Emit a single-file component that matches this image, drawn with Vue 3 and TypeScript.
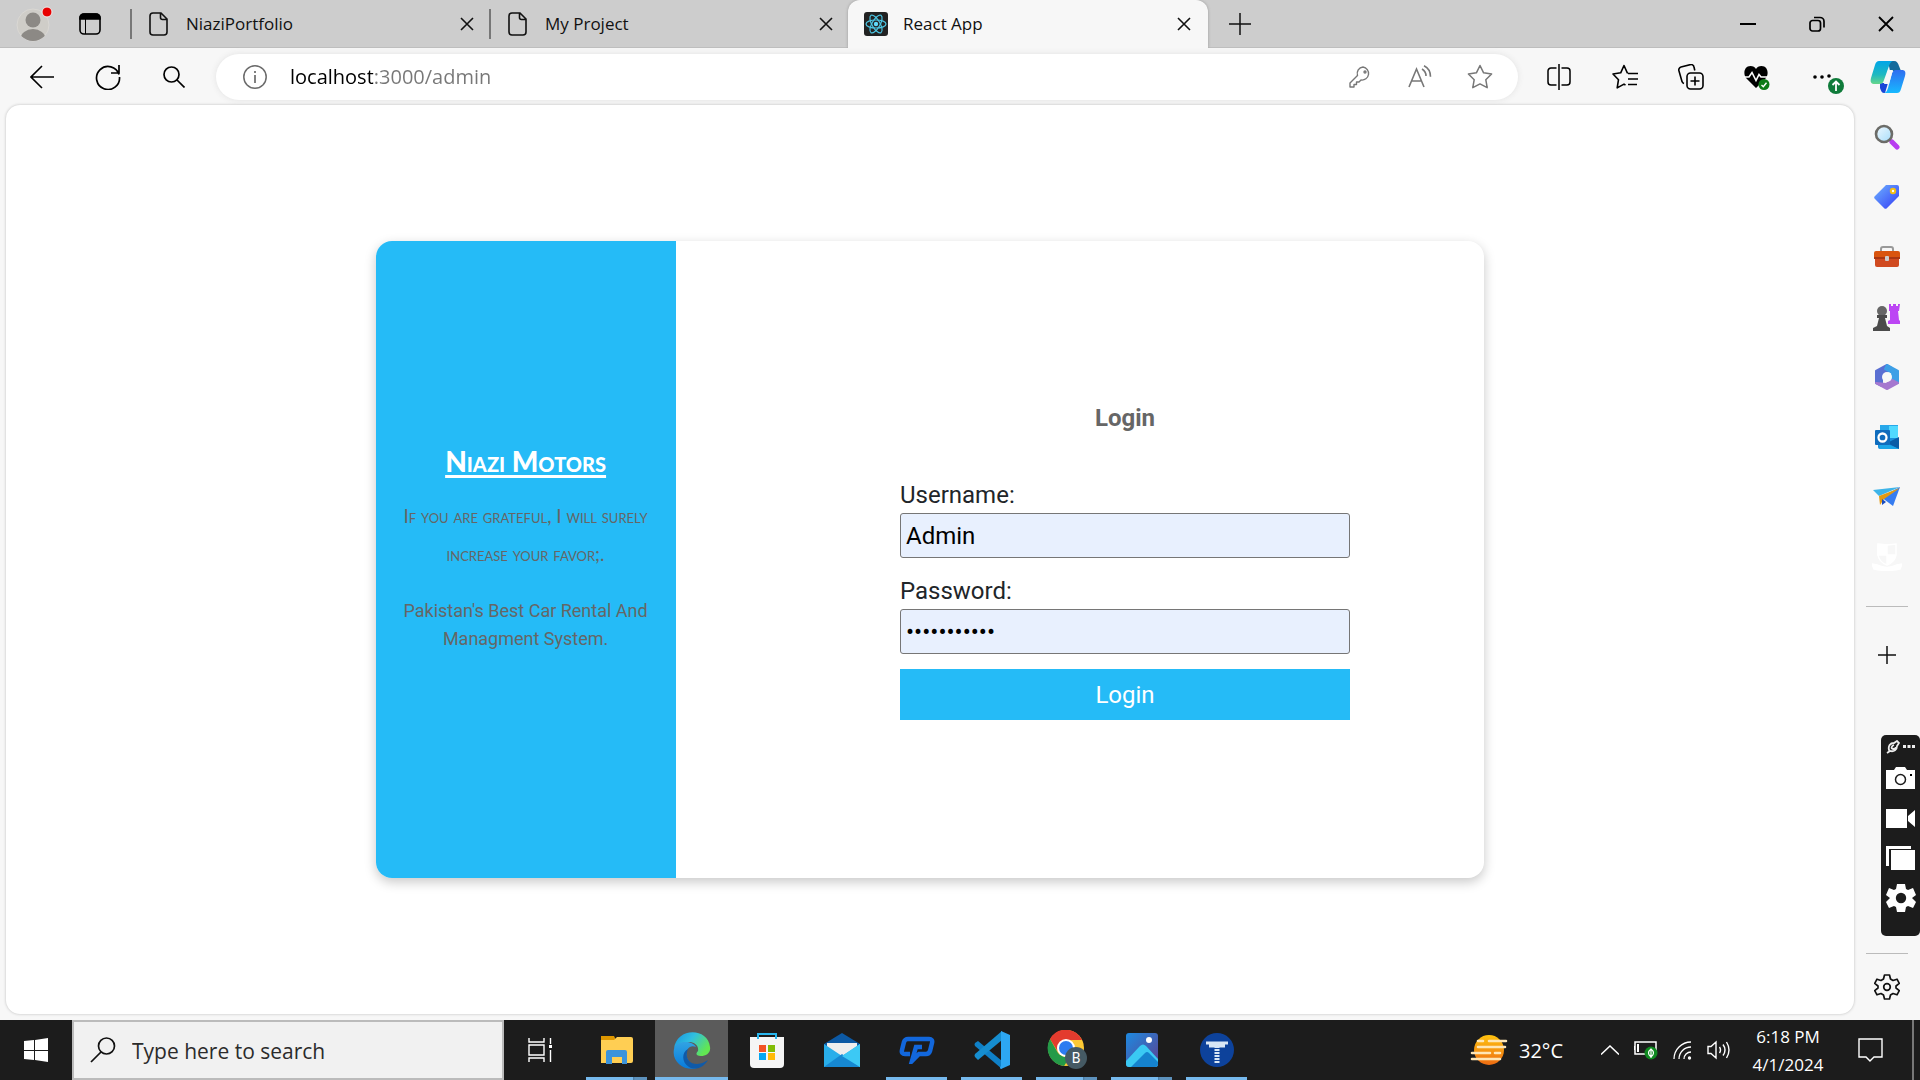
<script setup lang="ts">
import { ref } from 'vue'

interface Tab {
  title: string
  kind: 'page' | 'react'
  active: boolean
}

const tabs: Tab[] = [
  { title: 'NiaziPortfolio', kind: 'page', active: false },
  { title: 'My Project', kind: 'page', active: false },
  { title: 'React App', kind: 'react', active: true },
]

const address = ref('localhost:3000/admin')
const username = ref('Admin')
const password = ref('niazimotors')
const search = ref('')
</script>

<template>
  <div class="desktop">
    <header class="tabstrip">
      <button class="avatar" aria-label="Profile">
        <svg width="42" height="42" viewBox="0 0 42 42">
          <defs><clipPath id="face"><circle cx="20" cy="22" r="16" /></clipPath></defs>
          <circle cx="20" cy="22" r="16" fill="#cfcdc8" stroke="#dad8d4" />
          <g fill="#8c8985" clip-path="url(#face)">
            <ellipse cx="20" cy="17" rx="7.5" ry="7.5" />
            <ellipse cx="20" cy="36" rx="12.500" ry="10" />
          </g>
          <circle cx="34" cy="9" r="5" fill="#e80000" stroke="#eee" />
        </svg>
      </button>
      <button class="workspace" aria-label="Tab actions">
        <svg width="22" height="22" viewBox="0 0 22 22" fill="none" stroke="#000" stroke-width="1.600">
          <rect x="1" y="1" width="20" height="20" rx="4" />
          <path d="M1 6V5a4 4 0 0 1 4-4h12a4 4 0 0 1 4 4v1z" fill="#000" />
          <path d="M6.500 6v15" stroke-width="1" />
        </svg>
      </button>
      <nav class="tabs">
        <div v-for="tab in tabs" :key="tab.title" class="tab" :class="{ active: tab.active }">
          <svg v-if="tab.kind === 'page'" class="favicon" width="20" height="24" viewBox="0 0 20 24" fill="none" stroke="#111" stroke-width="1.600">
            <path d="M4 1h8l6 6v13a3 3 0 0 1-3 3H4a3 3 0 0 1-3-3V4a3 3 0 0 1 3-3zM11.500 1v4.500a2 2 0 0 0 2 2H18" />
          </svg>
          <svg v-else class="favicon" width="24" height="24" viewBox="0 0 24 24">
            <rect width="24" height="24" rx="3" fill="#222" />
            <g fill="none" stroke="#4cc6e4" stroke-width="1.200">
              <ellipse cx="12" cy="12" rx="10" ry="4" />
              <ellipse cx="12" cy="12" rx="10" ry="4" transform="rotate(60 12 12)" />
              <ellipse cx="12" cy="12" rx="10" ry="4" transform="rotate(120 12 12)" />
            </g>
            <circle cx="12" cy="12" r="2.200" fill="#61dafb" />
          </svg>
          <span class="tab-title">{{ tab.title }}</span>
          <button class="tab-close" :aria-label="'Close ' + tab.title">
            <svg width="14" height="14" viewBox="0 0 14 14" stroke="#111" stroke-width="1.600"><path d="M1 1l12 12M13 1L1 13" /></svg>
          </button>
        </div>
      </nav>
      <button class="new-tab" aria-label="New tab">
        <svg width="22" height="22" viewBox="0 0 22 22" stroke="#111" stroke-width="1.500"><path d="M11 0v22M0 11h22" /></svg>
      </button>
      <div class="window-controls">
        <button aria-label="Minimize"><svg width="16" height="16" viewBox="0 0 16 16" stroke="#000" stroke-width="2"><path d="M0 8h16" /></svg></button>
        <button aria-label="Restore">
          <svg width="16" height="16" viewBox="0 0 16 16" fill="none" stroke="#000" stroke-width="1.700"><rect x="1" y="4.500" width="10.500" height="10.500" rx="2.500" /><path d="M5 1.500h6a4 4 0 0 1 4 4v6" /></svg>
        </button>
        <button aria-label="Close"><svg width="16" height="16" viewBox="0 0 16 16" stroke="#000" stroke-width="1.800"><path d="M1 1l14 14M15 1L1 15" /></svg></button>
      </div>
    </header>

    <div class="toolbar">
      <div class="nav-buttons">
        <button aria-label="Back"><svg width="24" height="24" viewBox="0 0 24 24" fill="none" stroke="#000" stroke-width="1.600"><path d="M24 12H1M12 1L1 12l11 11" /></svg></button>
        <button aria-label="Refresh"><svg width="26" height="26" viewBox="0 0 26 26" fill="none" stroke="#000" stroke-width="1.700"><path d="M24 10.500A11.500 11.500 0 1 0 24.500 13M24 1v8h-8" /></svg></button>
        <button aria-label="Search"><svg width="22" height="22" viewBox="0 0 22 22" fill="none" stroke="#000" stroke-width="1.700"><circle cx="8.500" cy="8.500" r="7.500" /><path d="M14 14l7.500 7.500" /></svg></button>
      </div>
      <div class="address-bar">
        <svg class="info" width="24" height="24" viewBox="0 0 24 24" fill="none" stroke="#6b6b6b" stroke-width="1.500"><circle cx="12" cy="12" r="11.200" /><path d="M12 10v8M12 6v2" stroke-width="1.700" /></svg>
        <input v-model="address" class="address" type="text" aria-label="Address" />
        <button aria-label="Passwords">
          <svg width="22" height="22" viewBox="0 0 22 22" fill="none" stroke="#777" stroke-width="1.400"><path d="M14 1a6.500 6.500 0 1 1-2 13l-2 2H7.500v2.500H5V21H1v-4l7.500-7.500A6.500 6.500 0 0 1 14 1z" stroke-linejoin="round" /><circle cx="16" cy="6" r="1" /></svg>
        </button>
        <button aria-label="Read aloud">
          <svg width="24" height="24" viewBox="0 0 24 24" fill="none" stroke="#777" stroke-width="1.600"><path d="M1 22L8.500 4 16 22M3.500 16h10M14 4c2.500 1.500 4 4 4 7M16 .8c4 2 6.500 6 6.500 11" /></svg>
        </button>
        <button aria-label="Add to favorites">
          <svg width="26" height="26" viewBox="0 0 26 26" fill="none" stroke="#777" stroke-width="1.500" stroke-linejoin="round"><path d="M13 1.500l3.600 7.300 8 1.200-5.800 5.700 1.400 8-7.200-3.800-7.200 3.800 1.400-8L1.400 10l8-1.200z" /></svg>
        </button>
      </div>
      <div class="extras">
        <button aria-label="Split screen">
          <svg width="24" height="26" viewBox="0 0 24 26" fill="none" stroke="#000" stroke-width="1.500"><path d="M12 0v26M9.500 4H4a3 3 0 0 0-3 3v11a3 3 0 0 0 3 3h5.500M14.500 4H20a3 3 0 0 1 3 3v11a3 3 0 0 1-3 3h-5.500" /></svg>
        </button>
        <button aria-label="Favorites">
          <svg width="26" height="26" viewBox="0 0 26 26" fill="none" stroke="#000" stroke-width="1.600" stroke-linejoin="round"><path d="M16 9l-.7-.2L12 1.500 8.700 8.800 1 10l5.500 5.700-1.300 8.200 6.800-3.800 1.500 1M16 9.500h10M16 15h10M16 20.500h9" /></svg>
        </button>
        <button aria-label="Collections">
          <svg width="26" height="26" viewBox="0 0 26 26" fill="none" stroke="#000" stroke-width="1.600"><path d="M6 19.500a3 3 0 0 1-2-2L1 7a3 3 0 0 1 2-4l9-2.300A3 3 0 0 1 16 3l.8 3.500" /><rect x="9" y="9" width="16" height="16" rx="3.500" /><path d="M17 12.500v9M12.500 17h9" /></svg>
        </button>
        <button aria-label="Browser essentials">
          <svg width="26" height="26" viewBox="0 0 26 26"><path d="M12 24L2 14C-1 10 0 2 6.500 2 9 2 11 3 12 5c1-2 3-3 5.500-3C24 2 25 10 22 14z" fill="#000" /><path d="M0 13h5L8 8.500l4 8 3-6 2 2.500H25" fill="none" stroke="#fff" stroke-width="1.600" /><circle cx="20" cy="20.500" r="5.500" fill="#0f7b18" /><path d="M17.500 21l1.800 1.700 3.200-4" fill="none" stroke="#fff" stroke-width="1.400" /></svg>
        </button>
        <button aria-label="Settings and more">
          <svg width="42" height="36" viewBox="0 0 42 36"><circle cx="13" cy="18" r="1.800" /><circle cx="20" cy="18" r="1.800" /><circle cx="27" cy="17" r="1.800" /><circle cx="34" cy="27" r="8" fill="#0f7b3a" /><path d="M34 32v-9M30.500 26l3.500-3.500 3.500 3.500" fill="none" stroke="#fff" stroke-width="1.800" /></svg>
        </button>
        <button class="copilot" aria-label="Copilot">
          <svg width="36" height="34" viewBox="0 0 36 34">
            <defs>
              <linearGradient id="cp1" x1="0" y1="0" x2="0" y2="1"><stop offset="0" stop-color="#00a5e8" /><stop offset=".6" stop-color="#1fb9c0" /><stop offset="1" stop-color="#66d68a" /></linearGradient>
              <linearGradient id="cp2" x1="0" y1="0" x2="0" y2="1"><stop offset="0" stop-color="#2f6df0" /><stop offset="1" stop-color="#17b9ff" /></linearGradient>
            </defs>
            <path d="M18 1h6c3 0 4 2 5 5l2 5H20z" fill="#136a9c" />
            <path d="M10 23h8l-3 10h-1c-2 0-3-2-4-5z" fill="#1946d8" />
            <path d="M9 1h15c-3 0-4 2-5 5l-5 14c-1 3-2 4-5 4H5c-4 0-5-2-4-6L5 5c1-3 2-4 4-4z" fill="url(#cp1)" />
            <path d="M27 33H13c3 0 4-2 5-5l4-15c1-2 2-3 4-3h6c3 0 4 2 3 6l-4 13c-1 3-2 4-4 4z" fill="url(#cp2)" />
            <path d="M18 10h5l-4 14h-5z" fill="#f7f7f7" />
          </svg>
        </button>
      </div>
    </div>

    <div class="browser-body">
      <main class="page">
        <section class="card">
          <aside class="brand">
            <h1>Niazi Motors</h1>
            <p class="motto">If you are grateful, I will surely<br />increase your favor;.</p>
            <p class="tagline">Pakistan's Best Car Rental And<br />Managment System.</p>
          </aside>
          <div class="form-area">
            <form class="login" @submit.prevent>
              <h2>Login</h2>
              <label for="username">Username:</label>
              <input id="username" v-model="username" type="text" autocomplete="username" />
              <label for="password">Password:</label>
              <input id="password" v-model="password" type="password" autocomplete="current-password" />
              <button type="submit">Login</button>
            </form>
          </div>
        </section>
      </main>

      <aside class="sidebar">
        <button aria-label="Search">
          <svg width="26" height="26" viewBox="0 0 26 26"><defs><linearGradient id="lens" x1="0" y1="0" x2="1" y2="1"><stop offset="0" stop-color="#f0f9ff" /><stop offset="1" stop-color="#a6dcfa" /></linearGradient></defs><path d="M15 15l4 4" stroke="#777" stroke-width="3" /><path d="M18 18l5 5" stroke="#b83df0" stroke-width="5" stroke-linecap="round" /><circle cx="10" cy="10" r="8" fill="url(#lens)" stroke="#6c6c68" stroke-width="2.600" /></svg>
        </button>
        <button aria-label="Shopping">
          <svg width="26" height="26" viewBox="0 0 26 26"><defs><linearGradient id="tag" x1="0" y1="0" x2="1" y2="1"><stop offset="0" stop-color="#6db2ff" /><stop offset="1" stop-color="#343cf5" /></linearGradient></defs><path d="M12 1h11a2 2 0 0 1 2 2v9L13 24a2 2 0 0 1-3 0L1 15a2 2 0 0 1 0-3z" fill="url(#tag)" /><circle cx="19" cy="7" r="2.200" fill="#fff" stroke="#f3bd15" stroke-width="2" /></svg>
        </button>
        <button aria-label="Tools">
          <svg width="28" height="24" viewBox="0 0 28 24"><path d="M8 7V4a2 2 0 0 1 2-2h8a2 2 0 0 1 2 2v3" fill="none" stroke="#999" stroke-width="2" /><rect x="2" y="11" width="24" height="11" rx="2" fill="#d04a20" /><path d="M1 8a2 2 0 0 1 2-2h22a2 2 0 0 1 2 2v5H1z" fill="#d9540e" /><path d="M1 12h26v2H1z" fill="#a93612" /><rect x="12" y="11" width="4" height="5" rx="1" fill="#ccc" /></svg>
        </button>
        <button aria-label="Games">
          <svg width="28" height="28" viewBox="0 0 28 28"><path d="M16 1h2v2h2V1h3v2h2V1h2l-1 7h-1l1 9 1 1v3H15v-3l2-1V8h-1z" fill="#bc45f4" /><circle cx="9" cy="8" r="5" fill="#666" /><path d="M4 12h10v3h-2l2 8 3 2v3H0v-3l4-2 2-8H4z" fill="#4b4b4b" /></svg>
        </button>
        <button aria-label="Microsoft 365">
          <svg width="26" height="26" viewBox="0 0 26 26" stroke-linejoin="round" stroke-width="2"><path d="M13 1L2 7v12l6 3V13L18 4z" fill="#5a6fd2" stroke="#5a6fd2" /><path d="M13 1l11 6v12l-6-3V9L11 5z" fill="#3d9fe6" stroke="#3d9fe6" /><path d="M2 19l11 6 11-6-6-3-6 4z" fill="#a578cf" stroke="#a578cf" /><circle cx="13" cy="13" r="5" fill="#f7f7f7" /></svg>
        </button>
        <button aria-label="Outlook">
          <svg width="26" height="26" viewBox="0 0 26 26"><rect x="6" y="1" width="18" height="18" fill="#28a8ea" /><path d="M15 2h9v12h-9z" fill="#50d9ff" /><path d="M4 14h21v11H6a2 2 0 0 1-2-2z" fill="#178edb" /><path d="M25 13v12l-12-6z" fill="#0a5ba6" /><path d="M4 16l21 9H6z" fill="#1aa5e8" /><rect x="1" y="6" width="15" height="15" rx="1" fill="#0f6cbd" /><circle cx="8.500" cy="13.500" r="4" fill="none" stroke="#fff" stroke-width="2.300" /></svg>
        </button>
        <button aria-label="Drop">
          <svg width="28" height="20" viewBox="0 0 28 20"><path d="M0 3L27 0 6 9z" fill="#3eb4e8" /><path d="M27 0l-7 19-12-9z" fill="#367cf0" /><path d="M27 1L6 9l1 9 4-6z" fill="#e39a12" /><path d="M9 12l4 3-4 3z" fill="#174bc0" /></svg>
        </button>
        <button aria-label="Portal">
          <svg width="30" height="28" viewBox="0 0 30 28" fill="none" stroke="#fff" stroke-width="1.500"><path d="M6 1l9 1 9-1v11q-1 7-9 10-8-3-9-10z" /><path d="M6 2h9v10H6zM15 12h8q-1 6-8 9z" fill="#fff" /><path d="M0 21l5 1q10 5 20 0l5-1-2 5q-13 3-26 0z" fill="#fff" /></svg>
        </button>
        <hr />
        <button aria-label="Customize">
          <svg width="18" height="18" viewBox="0 0 18 18" stroke="#111" stroke-width="1.500"><path d="M9 0v18M0 9h18" /></svg>
        </button>
        <span class="spacer"></span>
        <hr class="low" />
        <button aria-label="Settings">
          <svg width="26" height="26" viewBox="0 0 26 26" fill="none" stroke="#111" stroke-width="1.700" stroke-linejoin="round"><path d="M10.500 1h5l1 4 2.500 1.500L23 5.200l2.300 4.200L22 12v2l3.300 2.600L23 20.800l-4-1.300-2.500 1.500-1 4h-5l-1-4L7 19.500l-4 1.300-2.300-4.200L4 14v-2L.7 9.400 3 5.200l4 1.300L9.500 5z" /><circle cx="13" cy="13" r="3.300" /></svg>
        </button>
      </aside>

      <div class="recorder">
        <div class="recorder-head">
          <svg width="14" height="14" viewBox="0 0 14 14" fill="none" stroke="#eee" stroke-width="1.800"><path d="M1 13l3-2M3 10c-1-4 1-7 5-7l3-2 2 2-2 3c0 4-3 6-7 5zM8 5C5 6 5 9 7 9s3-1 3-2" /></svg>
          <svg width="12" height="4" viewBox="0 0 12 4" fill="#eee"><path d="M0 0h3v3H0zM4.500 0h3v3h-3zM9 0h3v3H9z" /></svg>
        </div>
        <button aria-label="Screenshot"><svg width="29" height="22" viewBox="0 0 29 22"><path d="M0 3h8l2-3h9l2 3h8v19H0z" fill="#fff" /><circle cx="14.500" cy="12.500" r="5" fill="none" stroke="#1c1c1c" stroke-width="1.500" /><path d="M24 7h2v2h-2z" /></svg></button>
        <button aria-label="Record"><svg width="29" height="19" viewBox="0 0 29 19" fill="#fff"><path d="M0 0h21v19H0zM22 7l7-6v17l-7-6z" /></svg></button>
        <button aria-label="Gallery"><svg width="29" height="24" viewBox="0 0 29 24" fill="#fff"><path d="M0 0h25v3H3v17H0zM5 4h24v20H5z" /></svg></button>
        <button aria-label="Recorder settings"><svg width="30" height="30" viewBox="0 0 30 30"><path d="M11 1h8l1 5 2 1 5-2 3 7-4 3 4 4-3 6-5-2-2 1-1 5h-8l-1-5-2-1-5 2-3-6 4-4-4-3 3-7 5 2 2-1z" fill="#fff" /><circle cx="15" cy="15" r="5.200" fill="#1c1c1c" /></svg></button>
      </div>
    </div>

    <footer class="taskbar">
      <button class="start" aria-label="Start">
        <svg width="24" height="24" viewBox="0 0 24 24" fill="#fff"><path d="M0 3l10-1v10H0zM11 2l13-2v12H11zM0 13h10v9L0 21zM11 13h13v11l-13-2z" /></svg>
      </button>
      <div class="search-box">
        <svg width="26" height="26" viewBox="0 0 26 26" fill="none" stroke="#111" stroke-width="1.700"><circle cx="16.500" cy="9" r="8" /><path d="M11 15L1 25" /></svg>
        <input v-model="search" type="text" aria-label="Search" placeholder="Type here to search" />
      </div>
      <button class="task-view" aria-label="Task view">
        <svg width="25" height="24" viewBox="0 0 25 24" fill="none" stroke="#fff" stroke-width="1.400"><path d="M1 0v4h15V0M1 24v-4h15v4M1 7h15v10H1zM22.500 0v6M22.500 12v12" /><path d="M21 7h3v3h-3z" fill="#fff" stroke="none" /></svg>
      </button>

      <nav class="apps">
        <button class="open stacked" aria-label="File Explorer">
          <svg width="34" height="30" viewBox="0 0 34 30"><path d="M1 1h13l2 4H1z" fill="#de9700" /><path d="M1 5h13l3-3h14a2 2 0 0 1 2 2v22a2 2 0 0 1-2 2H1z" fill="#ffce53" /><path d="M6 29V17q0-2 2-2h17q2 0 2 2v12h-5v-7H12v7z" fill="#3c93db" /></svg>
        </button>
        <button class="current" aria-label="Microsoft Edge">
          <svg width="38" height="38" viewBox="0 0 38 38"><defs><linearGradient id="e1" x1="0" y1="0" x2="1" y2=".5"><stop offset="0" stop-color="#1792df" /><stop offset=".5" stop-color="#30bfe0" /><stop offset="1" stop-color="#62e652" /></linearGradient><linearGradient id="e2" x1="0" y1="0" x2="0" y2="1"><stop offset="0" stop-color="#31a3e3" /><stop offset="1" stop-color="#087bdc" /></linearGradient></defs><path d="M1 18C3-4 35-4 37 16c1 6-4 9-9 9-6 0-5-3-3-5 1-6-4-9-9-9C9 11 2 14 1 18z" fill="url(#e1)" /><path d="M1 18c1-8 18-10 22-2-8-3-11 5-9 11 2 5 7 8 13 9C14 42-2 32 1 18z" fill="url(#e2)" /><path d="M15 18c-3 6-1 15 9 15 5 0 9-3 11-4-4 7-12 11-19 7-7-4-8-14-1-18z" fill="#105aa8" /></svg>
        </button>
        <button aria-label="Microsoft Store">
          <svg width="36" height="37" viewBox="0 0 36 37"><path d="M1 5h34v27q0 4-4 4H5q-4 0-4-4z" fill="#f5f5f5" /><path d="M9 7V2h18v5" fill="none" stroke="#28b6ee" stroke-width="2" /><path d="M10 13h7v7h-7z" fill="#f35325" /><path d="M19 13h7v7h-7z" fill="#81bc06" /><path d="M10 21h7v7h-7z" fill="#05a6f0" /><path d="M19 21h7v7h-7z" fill="#ffba08" /></svg>
        </button>
        <button aria-label="Mail">
          <svg width="36" height="34" viewBox="0 0 36 34"><path d="M0 11L18 0l18 11v8H0z" fill="#0c59a4" /><path d="M3 10h30v12H3z" fill="#eee" /><path d="M0 11l18 12 18-12v23H0z" fill="#29aeea" /><path d="M0 34l18-13 18 13z" fill="#1688d2" /><path d="M18 23l18-12v23z" fill="#3cc9f5" /></svg>
        </button>
        <button class="open" aria-label="PT">
          <svg width="36" height="28" viewBox="0 0 36 28" fill="none" stroke="#1267dc" stroke-width="4.500"><path d="M11 18H6q-4 0-3-4L5 6q1-3 4-3h21q4 0 3 4l-2 8q-1 3-4 3h-7l-7 7 4-14h6" /></svg>
        </button>
        <button class="open" aria-label="Visual Studio Code">
          <svg width="36" height="38" viewBox="0 0 36 38"><path d="M1 12l3-2 24 20v8L1 15q-1-2 0-3z" fill="#0f80c7" /><path d="M1 26l3 3 24-20V0L1 23q-1 2 0 3z" fill="#168ed0" /><path d="M27 0l9 4v30l-9 4q-2-1 0-3z" fill="#2da7f2" /></svg>
        </button>
        <button class="open stacked" aria-label="Google Chrome">
          <svg width="40" height="40" viewBox="0 0 40 40"><circle cx="19" cy="18" r="18" fill="#fcc934" /><path d="M3 9a18 18 0 0 1 32 1H19a9 9 0 0 0-8 12z" fill="#e33b2e" /><path d="M3 9l8 14q4 5 12 4l-6 9A18 18 0 0 1 3 9z" fill="#249a48" /><circle cx="19" cy="18" r="9" fill="#fff" /><circle cx="19" cy="18" r="7" fill="#2d7cf0" /><circle cx="29" cy="28" r="11" fill="#455a64" /><text x="29" y="33" fill="#fff" font-family="Roboto, sans-serif" font-size="14" text-anchor="middle">B</text></svg>
        </button>
        <button class="open stacked" aria-label="Photos">
          <svg width="32" height="34" viewBox="0 0 32 34"><defs><linearGradient id="ph" x1="0" y1="0" x2="1" y2="1"><stop offset="0" stop-color="#1d8ae1" /><stop offset="1" stop-color="#5d408f" /></linearGradient></defs><rect width="32" height="34" rx="3" fill="url(#ph)" /><path d="M0 28l14-15q3-3 6 0l12 13v5q0 3-3 3H3q-3 0-3-3z" fill="#3ac9f3" /><path d="M5 34l14-14q2-2 4 0l9 9v2q0 3-3 3z" fill="#1583ce" /><circle cx="23" cy="7" r="3" fill="#fff" /></svg>
        </button>
        <button class="open" aria-label="T">
          <svg width="36" height="36" viewBox="0 0 36 36"><circle cx="18" cy="18" r="17" fill="#0d429b" /><path d="M7 11h22M10 14h16" stroke="#d9e7f5" stroke-width="3" /><path d="M18 11v20" stroke="#d9e7f5" stroke-width="5" stroke-dasharray="2 1" /></svg>
        </button>
      </nav>

      <button class="weather">
        <svg width="38" height="32" viewBox="0 0 38 32"><defs><linearGradient id="sun" x1="0" y1="0" x2="0" y2="1"><stop offset="0" stop-color="#ffc30e" /><stop offset="1" stop-color="#ed6b12" /></linearGradient></defs><circle cx="19" cy="16" r="15" fill="url(#sun)" /><path d="M8 7h5M19 7h17M8 13h27M2 19h18M25 19h5M2 25h28" stroke="#ffe6b5" stroke-width="2.600" stroke-linecap="round" /></svg>
        <span>32°C</span>
      </button>
      <div class="tray">
        <button aria-label="Show hidden icons"><svg width="18" height="10" viewBox="0 0 18 10" fill="none" stroke="#fff" stroke-width="1.500"><path d="M0 9.500L9 1l9 8.500" /></svg></button>
        <button aria-label="Battery"><svg width="24" height="20" viewBox="0 0 24 20"><path d="M1 2h21v12H1zM0 6v4" fill="none" stroke="#fff" stroke-width="1.500" /><path d="M3 4h2v8H3z" fill="#fff" /><circle cx="17" cy="13" r="6.500" fill="#0f8a20" /><path d="M17 9q5 4 0 8-5-4 0-8zM17 10v8" fill="none" stroke="#fff" stroke-width="1.200" /></svg></button>
        <button aria-label="Network"><svg width="19" height="19" viewBox="0 0 19 19" fill="none" stroke="#fff" stroke-width="1.300"><path d="M1 18A17 17 0 0 1 18 1M6 18A12 12 0 0 1 18 6M11 18a7 7 0 0 1 7-7" /><circle cx="16.500" cy="17" r="1" fill="#fff" /></svg></button>
        <button aria-label="Volume"><svg width="23" height="20" viewBox="0 0 23 20" fill="none" stroke="#fff" stroke-width="1.400"><path d="M1 6.500h3L9 2v16l-5-4.500H1zM12.500 7q2 3 0 6M16 4.500q4 5.500 0 11M19.500 2q5 8 0 16" /></svg></button>
      </div>
      <div class="clock"><span>6:18 PM</span><span>4/1/2024</span></div>
      <button class="notify" aria-label="Notifications"><svg width="25" height="25" viewBox="0 0 25 25" fill="none" stroke="#fff" stroke-width="1.400"><path d="M1 1h23v18h-8l-4 4-4-4H1z" /></svg></button>
      <span class="show-desktop"></span>
    </footer>
  </div>
</template>

<style>
body {
  margin: 0;
  background: #f7f7f7;
}
</style>

<style scoped>
.desktop {
  display: flex;
  flex-direction: column;
  height: 100vh;
  background: #f7f7f7;
  color: #111;
  font-family: "Segoe UI", "Open Sans", sans-serif;
  overflow: hidden;
}

.desktop * {
  box-sizing: border-box;
}

button {
  display: flex;
  align-items: center;
  justify-content: center;
  flex: none;
  margin: 0;
  padding: 0;
  border: 0;
  background: none;
  font: inherit;
  color: inherit;
}

svg {
  flex: none;
}

.tabstrip {
  display: flex;
  flex: none;
  height: 48px;
  background: #cdcdcd;
  box-shadow: inset 0 -1px 0 #bdbdbd;
}

.avatar {
  width: 50px;
  margin-left: 9px;
}

.workspace {
  width: 50px;
  margin: 0 15px 0 6px;
}

.tabs {
  display: flex;
  min-width: 0;
}

.tab {
  display: flex;
  align-items: center;
  gap: 17px;
  width: 359px;
  min-width: 0;
  padding: 0 12px 0 19px;
  background: linear-gradient(#777, #777) left center / 2px 30px no-repeat;
}

.tab.active {
  gap: 15px;
  width: 360px;
  padding: 0 14px 0 16px;
  border-radius: 12px 12px 0 0;
  background: #f7f7f7;
  box-shadow: 0 0 3px #999;
  clip-path: inset(0 -3px 0 -3px);
}

.tab-title {
  flex: 1;
  overflow: hidden;
  font-size: 17px;
  line-height: 24px;
  white-space: nowrap;
}

.tab-close {
  width: 20px;
  height: 20px;
}

.new-tab {
  width: 44px;
  margin-left: 10px;
}

.window-controls {
  display: flex;
  margin-left: auto;
}

.window-controls button {
  width: 69px;
}

.toolbar {
  display: flex;
  align-items: center;
  flex: none;
  height: 57px;
}

.nav-buttons,
.extras {
  display: flex;
  flex: none;
}

.nav-buttons {
  margin: 0 9px;
}

.nav-buttons button,
.extras button {
  width: 66px;
  height: 46px;
}

.extras {
  margin-left: 8px;
}

.extras .copilot {
  width: 64px;
}

.address-bar {
  display: flex;
  align-items: center;
  flex: 1;
  min-width: 0;
  height: 46px;
  padding: 0 8px 0 27px;
  border-radius: 23px;
  background: #fff;
  box-shadow: 0 0 6px #e2e2e2;
}

.address-bar button {
  width: 60px;
  height: 46px;
}

.address {
  flex: 1;
  min-width: 0;
  height: 32px;
  margin-left: 23px;
  padding: 0;
  border: 0;
  outline: 0;
  background: linear-gradient(90deg, #000 83px, #777 83px);
  background-clip: text;
  -webkit-background-clip: text;
  color: #000;
  -webkit-text-fill-color: transparent;
  font: 20px / 32px "Segoe UI", "Open Sans", sans-serif;
}

.browser-body {
  position: relative;
  display: flex;
  flex: 1;
  min-height: 0;
}

.page {
  display: flex;
  align-items: center;
  justify-content: center;
  flex: 1;
  margin: 0 0 6px 6px;
  border-radius: 14px;
  background: #fff;
  box-shadow: 0 0 3px #bbb;
  font-family: Roboto, sans-serif;
}

.card {
  display: flex;
  width: 60%;
  height: 70%;
  overflow: hidden;
  border-radius: 16px;
  background: #fff;
  box-shadow: 0 4px 12px rgba(0, 0, 0, 0.22);
}

.brand {
  display: flex;
  flex-direction: column;
  align-items: center;
  justify-content: center;
  flex: none;
  width: 300px;
  padding-bottom: 24px;
  background: #25bbf7;
  color: #666;
  text-align: center;
}

.brand h1 {
  margin: 0;
  color: #fff;
  font: 900 28px / 40px Waltograph, Lato, sans-serif;
  font-variant-caps: small-caps;
  text-decoration: underline 3px;
  text-underline-offset: 3px;
}

.brand p {
  margin: 0;
}

.brand .motto {
  margin: 16px 0 24px;
  font: 19px / 38px Waltograph, Lato, sans-serif;
  font-variant-caps: small-caps;
  white-space: nowrap;
}

.brand .tagline {
  font-size: 18px;
  line-height: 28px;
}

.form-area {
  display: flex;
  align-items: center;
  justify-content: center;
  flex: 1;
  padding: 2px 0 0 90px;
}

.login {
  display: flex;
  flex-direction: column;
  width: 450px;
  color: #212529;
  font-size: 24px;
  line-height: 36px;
}

.login h2 {
  margin: 0 0 41px;
  color: #666;
  font-size: 24px;
  font-weight: 700;
  line-height: 36px;
  text-align: center;
}

.login input {
  height: 45px;
  margin: 0 0 15px;
  padding: 1px 5px;
  border: 1px solid #767676;
  border-radius: 3px;
  outline: 0;
  background: #e8f0fe;
  color: #000;
  font: inherit;
}

.login button {
  height: 51px;
  background: #25bbf7;
  color: #fff;
}

.sidebar {
  display: flex;
  flex-direction: column;
  align-items: center;
  flex: none;
  width: 66px;
  padding: 2px 0 3px;
}

.sidebar button {
  width: 60px;
  height: 60px;
}

.sidebar hr {
  width: 42px;
  height: 1px;
  margin: 19px 0 18px;
  border: 0;
  background: #bbb;
}

.sidebar .low {
  margin: 0 0 3px;
}

.spacer {
  flex: 1;
}

.recorder {
  position: absolute;
  right: 0;
  bottom: 84px;
  display: flex;
  flex-direction: column;
  align-items: center;
  width: 39px;
  height: 201px;
  border-radius: 5px;
  background: #1c1c1c;
}

.recorder-head {
  display: flex;
  align-items: center;
  gap: 3px;
  height: 23px;
}

.recorder button {
  width: 39px;
  height: 40px;
}

.taskbar {
  display: flex;
  flex: none;
  height: 60px;
  background: #1c1c1c;
  color: #fff;
}

.start {
  width: 72px;
}

.search-box {
  display: flex;
  align-items: center;
  flex: none;
  width: 432px;
  padding: 0 16px;
  border: 2px solid #bbb;
  background: #f1f1f1;
}

.search-box input {
  flex: 1;
  min-width: 0;
  margin-left: 16px;
  padding: 2px 0 0;
  border: 0;
  outline: 0;
  background: none;
  font: 21px / 32px "Segoe UI", "Open Sans", sans-serif;
}

.search-box input::placeholder {
  color: #2b2b2b;
  opacity: 1;
}

.task-view {
  width: 72px;
}

.apps {
  display: flex;
  gap: 2px;
  margin-left: 4px;
}

.apps button {
  width: 73px;
}

.apps .open {
  background: linear-gradient(#76b9ed, #76b9ed) center bottom / 61px 3px no-repeat;
}

.apps .stacked {
  background-image: linear-gradient(90deg, #76b9ed 47px, #4878a0 47px, #5d92bd 49px);
}

.apps .current {
  background: linear-gradient(#76b9ed, #76b9ed) center bottom / 100% 3px no-repeat #5b5b5b;
}

.weather {
  gap: 11px;
  margin: 0 29px 0 auto;
  font-size: 20px;
}

.tray {
  display: flex;
}

.tray button {
  width: 36px;
}

.clock {
  display: flex;
  flex-direction: column;
  align-items: center;
  width: 104px;
  padding-top: 3px;
  font-size: 17px;
  line-height: 28px;
}

.notify {
  width: 60px;
}

.show-desktop {
  width: 8px;
  margin-left: 12px;
  border-left: 2px solid #777;
}
</style>
